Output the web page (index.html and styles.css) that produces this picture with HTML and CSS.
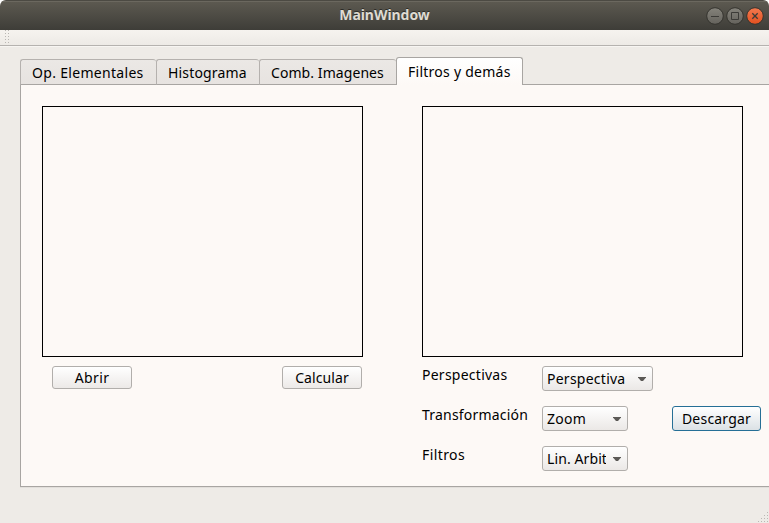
FILE: index.html
```html
<!DOCTYPE html>
<html lang="es">
<head>
<meta charset="utf-8">
<title>MainWindow</title>
<link rel="stylesheet" href="styles.css">
</head>
<body>
<div class="window">
  <header class="titlebar">
    <h1 class="title">MainWindow</h1>
    <svg class="controls" width="60" height="20" viewBox="0 0 60 20">
      <defs>
        <linearGradient id="gray" x1="0" y1="0" x2="0" y2="1"><stop offset="0" stop-color="#85837b"/><stop offset="1" stop-color="#64625c"/></linearGradient>
        <linearGradient id="orange" x1="0" y1="0" x2="0" y2="1"><stop offset="0" stop-color="#f37a50"/><stop offset="1" stop-color="#e2501f"/></linearGradient>
      </defs>
      <g stroke="#34332e" stroke-width="1">
        <circle cx="10" cy="10" r="8.3" fill="url(#gray)"/>
        <circle cx="30" cy="10" r="8.3" fill="url(#gray)"/>
        <circle cx="50" cy="10" r="8.3" fill="url(#orange)"/>
      </g>
      <g fill="none" stroke="#3c3b37" stroke-width="1">
        <path d="M6 10.500h8"/>
        <path d="M26.500 6.500h7v7h-7z"/>
        <path stroke-width="1.3" d="M47.300 7.300l5.400 5.400M52.700 7.300l-5.400 5.400"/>
      </g>
    </svg>
  </header>
  <div class="toolbar"><svg class="handle" width="4" height="16" fill="#b9b6b2"><path d="M0 0h1v1H0zM3 0h1v1H3zM0 3h1v1H0zM3 3h1v1H3zM0 6h1v1H0zM3 6h1v1H3zM0 9h1v1H0zM3 9h1v1H3zM0 12h1v1H0zM3 12h1v1H3z"/></svg></div>
  <main class="content">
    <nav class="tabs">
      <a class="tab tab-ops"><span>Op. Elementales</span></a>
      <a class="tab tab-hist"><span>Histograma</span></a>
      <a class="tab tab-comb"><span>Comb. Imagenes</span></a>
      <a class="tab tab-active"><span>Filtros y demás</span></a>
    </nav>
    <section class="panel">
      <div class="source">
        <div class="view"></div>
        <div class="actions">
          <button class="button abrir">Abrir</button>
          <button class="button calcular">Calcular</button>
        </div>
      </div>
      <div class="result">
        <div class="view"></div>
        <div class="options">
          <label class="l-persp">Perspectivas</label>
          <div class="combo wide"><span class="c-persp">Perspectiva</span><svg width="8" height="5"><path d="M0 0h8v.6L5 4H3L0 .6z"/></svg></div>
          <label class="l-trans">Transformación</label>
          <div class="combo"><span class="c-zoom">Zoom</span><svg width="8" height="5"><path d="M0 0h8v.6L5 4H3L0 .6z"/></svg></div>
          <button class="button descargar">Descargar</button>
          <label class="l-filt">Filtros</label>
          <div class="combo"><span class="c-lin">Lin. Arbitraria</span><svg width="8" height="5"><path d="M0 0h8v.6L5 4H3L0 .6z"/></svg></div>
        </div>
      </div>
    </section>
  </main>
  <svg class="grip" width="12" height="12" fill="#bbb8b4"><path d="M10 1h1v1h-1zM7 4h1v1h-1zM10 4h1v1h-1zM4 7h1v1h-1zM7 7h1v1h-1zM10 7h1v1h-1zM1 10h1v1h-1zM4 10h1v1h-1zM7 10h1v1h-1zM10 10h1v1h-1z"/></svg>
</div>
</body>
</html>
```
FILE: styles.css
```css
* { box-sizing: border-box; }
body { margin: 0; background: #fff; overflow: hidden; }
.window {
  position: relative; width: 769px; height: 523px; overflow: hidden;
  background: #eeebe7; color: #000; border-radius: 6px 6px 0 0;
  font: 14px/20px "Noto Sans", sans-serif; white-space: nowrap;
}
.titlebar {
  height: 30px; display: grid; grid-template-columns: 64px 1fr 64px; align-items: center;
  background: linear-gradient(#5d5a51, #3e3d38); border-top: 1px solid #4c4a43;
  box-shadow: inset 0 1px #6b685f;
}
.title { grid-column: 2; margin: 0 0 2px; text-align: center; font-size: 14px; line-height: 20px; font-weight: 700; color: #dfdbd2; letter-spacing: -0.05px; text-shadow: 0 -1px #2d2c28; }
.controls { display: block; }
.toolbar { height: 16px; padding-left: 5px; background: linear-gradient(#f6f3ef, #edeae6); border-bottom: 1px solid #b5b2af; }
.handle { display: block; }
.content { padding: 11px 0 0 20px; box-shadow: inset 0 1px #f7f5f2; }
.tabs { display: flex; align-items: flex-end; height: 28px; position: relative; z-index: 1; }
.tab { height: 26px; border: 1px solid #b5b1ae; border-bottom-color: #a8a5a2; border-right: 0; background: linear-gradient(#ebe8e5, #e7e3e0); border-radius: 3px 3px 0 0; padding: 3px 0 0 11px; }
.tab-ops { width: 136px; letter-spacing: .31px; }
.tab-hist { width: 103px; letter-spacing: .17px; }
.tab-comb { width: 137px; letter-spacing: .07px; }
.tab-active { width: 127px; height: 28px; padding-top: 4px; border: 1px solid #a8a5a2; border-bottom: 0; background: linear-gradient(#fff, #fdf9f6); letter-spacing: .26px; }
.panel {
  height: 403px; margin-top: -1px; padding: 21px 0 0 21px; display: flex; gap: 59px;
  background: #fdf9f6; border: 1px solid #a8a5a2; border-right: 0; box-shadow: 0 1px #e2dfdb;
}
.view { width: 321px; height: 251px; border: 1px solid #000; }
.actions { display: flex; justify-content: space-between; padding: 9px 1px 0 10px; }
.button {
  width: 80px; height: 23px; padding: 0; border: 1px solid #b1aeab; border-radius: 3px;
  background: linear-gradient(#fff, #ece9e7); font: inherit; line-height: 20px; color: #000;
}
.abrir { letter-spacing: .4px; }
.calcular { letter-spacing: .1px; }
.options { display: grid; grid-template-columns: 120px 130px 89px; grid-auto-rows: 25px; row-gap: 15px; padding-top: 9px; }
.options label { grid-column: 1; margin-top: -1px; }
.l-persp { letter-spacing: .25px; }
.l-trans { letter-spacing: .2px; }
.l-filt { letter-spacing: .4px; }
.combo {
  grid-column: 2; width: 86px; height: 25px; display: flex; align-items: center; justify-content: space-between;
  border: 1px solid #b1aeab; border-radius: 3px; padding: 0 6px 0 4px; background: linear-gradient(#fff, #ebe8e6);
}
.combo.wide { width: 111px; }
.combo span { overflow: hidden; width: 59px; padding-top: 1px; }
.combo.wide span { width: 82px; }
.c-persp { letter-spacing: .25px; }
.c-zoom { letter-spacing: .25px; }
.c-lin { letter-spacing: .1px; }
.combo svg { fill: #5b5956; margin-top: 1px; flex: none; }
.descargar { grid-column: 3; width: 89px; height: 25px; border-color: #256f96; background: linear-gradient(#fff, #dbe1e5); letter-spacing: .2px; }
.grip { position: absolute; right: 0; bottom: 0; }
```
